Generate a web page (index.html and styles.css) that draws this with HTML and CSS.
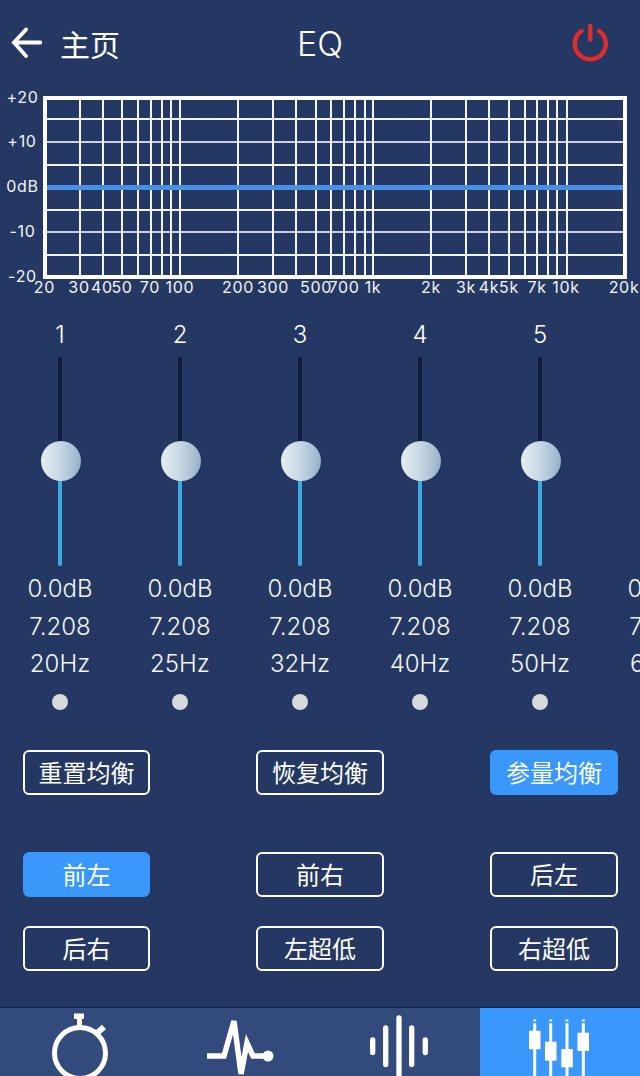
FILE: index.html
```html
<!DOCTYPE html>
<html lang="zh-CN">
<head>
  <meta charset="UTF-8">
  <meta name="viewport" content="width=device-width, initial-scale=1.0">
  <title>EQ</title>
  <link rel="stylesheet" href="styles.css">
</head>
<body>
  <div class="app">
    <header class="topbar">
      <div class="back">
        <svg class="back-icon" viewBox="0 0 32 34" width="32" height="34">
          <path d="M30.500 16.500H4M16 3.500L4 16.500L16 30" fill="none" stroke="#fff" stroke-width="3.800" stroke-linecap="round" stroke-linejoin="miter"/>
        </svg>
        <span class="back-label">主页</span>
      </div>
      <h1 class="title">EQ</h1>
      <svg class="power-icon" viewBox="0 0 38 40" width="38" height="40">
        <path d="M9.500 8A15.500 15.500 0 1 0 27.100 8" fill="none" stroke="#e12c2c" stroke-width="4.400" stroke-linecap="round"/>
        <path d="M18.300 3V16.500" fill="none" stroke="#e12c2c" stroke-width="4.400" stroke-linecap="round"/>
      </svg>
    </header>

    <!-- 频响曲线 -->
    <svg class="chart" viewBox="0 84 640 216" width="640" height="216">
      <g class="grid">
        <path d="M47 119H623M47 165H623M47 210H623M47 255H623"/>
        <path class="grid-soft" d="M47 142H623M47 232H623"/>
        <path d="M80 98V277M103 98V277M122 98V277M138 98V277M151 98V277M162 98V277M171 98V277M180 98V277"/>
        <path d="M238 98V277M273 98V277M296 98V277M316 98V277M331 98V277M344 98V277M355 98V277M365 98V277M373 98V277"/>
        <path d="M431 98V277M466 98V277M489 98V277M509 98V277M525 98V277M537 98V277M548 98V277M557 98V277M567 98V277"/>
      </g>
      <rect class="frame" x="45" y="98" width="580" height="179"/>
      <path class="zero-line" d="M47 187.500H623"/>
      <g class="y-labels">
        <text x="22.500" y="102.500">+20</text>
        <text x="22" y="147">+10</text>
        <text x="22.500" y="192">0dB</text>
        <text x="22.500" y="236.500">-10</text>
        <text x="22.500" y="281.500">-20</text>
      </g>
      <g class="x-labels">
        <text x="44.500" y="293">20</text>
        <text x="79" y="293">30</text>
        <text x="102" y="293">40</text>
        <text x="122" y="293">50</text>
        <text x="150" y="293">70</text>
        <text x="180" y="293">100</text>
        <text x="238" y="293">200</text>
        <text x="273" y="293">300</text>
        <text x="316" y="293">500</text>
        <text x="344" y="293">700</text>
        <text x="373" y="293">1k</text>
        <text x="431" y="293">2k</text>
        <text x="466" y="293">3k</text>
        <text x="489" y="293">4k</text>
        <text x="509" y="293">5k</text>
        <text x="537" y="293">7k</text>
        <text x="566" y="293">10k</text>
        <text x="624" y="293">20k</text>
      </g>
    </svg>

    <section class="bands">
      <div class="band">
        <div class="band-no">1</div>
        <div class="slider"><div class="track-top"></div><div class="knob"></div><div class="track-bottom"></div></div>
        <div class="band-val">0.0dB</div><div class="band-val">7.208</div><div class="band-val">20Hz</div>
        <div class="band-dot"></div>
      </div>
      <div class="band">
        <div class="band-no">2</div>
        <div class="slider"><div class="track-top"></div><div class="knob"></div><div class="track-bottom"></div></div>
        <div class="band-val">0.0dB</div><div class="band-val">7.208</div><div class="band-val">25Hz</div>
        <div class="band-dot"></div>
      </div>
      <div class="band">
        <div class="band-no">3</div>
        <div class="slider"><div class="track-top"></div><div class="knob"></div><div class="track-bottom"></div></div>
        <div class="band-val">0.0dB</div><div class="band-val">7.208</div><div class="band-val">32Hz</div>
        <div class="band-dot"></div>
      </div>
      <div class="band">
        <div class="band-no">4</div>
        <div class="slider"><div class="track-top"></div><div class="knob"></div><div class="track-bottom"></div></div>
        <div class="band-val">0.0dB</div><div class="band-val">7.208</div><div class="band-val">40Hz</div>
        <div class="band-dot"></div>
      </div>
      <div class="band">
        <div class="band-no">5</div>
        <div class="slider"><div class="track-top"></div><div class="knob"></div><div class="track-bottom"></div></div>
        <div class="band-val">0.0dB</div><div class="band-val">7.208</div><div class="band-val">50Hz</div>
        <div class="band-dot"></div>
      </div>
      <div class="band">
        <div class="band-no">6</div>
        <div class="slider"><div class="track-top"></div><div class="knob"></div><div class="track-bottom"></div></div>
        <div class="band-val">0.0dB</div><div class="band-val">7.208</div><div class="band-val">63Hz</div>
        <div class="band-dot"></div>
      </div>
    </section>

    <section class="actions">
      <button class="btn">重置均衡</button>
      <button class="btn">恢复均衡</button>
      <button class="btn btn-on">参量均衡</button>
    </section>

    <section class="channels">
      <button class="btn btn-on">前左</button>
      <button class="btn">前右</button>
      <button class="btn">后左</button>
      <button class="btn">后右</button>
      <button class="btn">左超低</button>
      <button class="btn">右超低</button>
    </section>

    <nav class="tabs">
      <div class="tab">
        <svg viewBox="0 0 160 68" width="160" height="68">
          <circle cx="80" cy="45" r="25.500" fill="none" stroke="#fff" stroke-width="5"/>
          <path d="M74 5.500H84V11H82V18H77V11H74Z" fill="#fff"/>
          <path d="M97 25L104 19" fill="none" stroke="#fff" stroke-width="6"/>
        </svg>
      </div>
      <div class="tab">
        <svg viewBox="0 0 160 68" width="160" height="68">
          <path d="M47 48H64L74 13L81 66L87 35L93 48H106" fill="none" stroke="#fff" stroke-width="5.500" stroke-linejoin="miter"/>
          <circle cx="108" cy="48" r="5.500" fill="#fff"/>
        </svg>
      </div>
      <div class="tab">
        <svg viewBox="0 0 160 68" width="160" height="68">
          <path d="M79 10V72M65.700 20V56.500M91.700 20V56.500M52.700 32V44.500M105.300 32V44.500" fill="none" stroke="#fff" stroke-width="5.300" stroke-linecap="round"/>
        </svg>
      </div>
      <div class="tab tab-on">
        <svg viewBox="0 0 160 68" width="160" height="68">
          <path d="M54.700 15.300V68M70.700 15.300V68M87 15.300V68M103.300 15.300V68" fill="none" stroke="#fff" stroke-width="3"/>
          <path d="M54.700 11V13.700M70.700 11V13.700M87 11V13.700M103.300 11V13.700" fill="none" stroke="#fff" stroke-width="3" opacity=".7"/>
          <rect x="49" y="22.700" width="11.500" height="18.600" fill="#fff"/>
          <rect x="65" y="33.700" width="11.500" height="19" fill="#fff"/>
          <rect x="81.300" y="41" width="11.500" height="18.300" fill="#fff"/>
          <rect x="97.500" y="24.700" width="11.500" height="18.300" fill="#fff"/>
        </svg>
      </div>
    </nav>
  </div>
</body>
</html>
```

FILE: styles.css
```css
body {
  margin: 0;
  background-color: #253864;
  font-family: "Inter", "Noto Sans CJK SC", sans-serif;
  color: #fff;
  overflow: hidden;
}

.app {
  width: 640px;
  height: 1076px;
  display: flex;
  flex-direction: column;
  overflow: hidden;
}

.topbar {
  height: 84px;
  box-sizing: border-box;
  padding: 2px 30px 0 10px;
  display: flex;
  align-items: center;
  justify-content: space-between;
  position: relative;
}

.back {
  display: flex;
  align-items: center;
  gap: 20px;
}

.back-label {
  font-size: 30px;
  font-weight: 400;
  margin-left: -2px;
}

.title {
  position: absolute;
  left: 0;
  right: 0;
  top: 23px;
  margin: 0;
  text-align: center;
  font-size: 34px;
  font-weight: 300;
}

.chart {
  display: block;
  flex-shrink: 0;
}

.grid path {
  fill: none;
  stroke: #f1f4f8;
  stroke-width: 2;
}

.grid .grid-soft {
  stroke: #c9d2e0;
}

.frame {
  fill: none;
  stroke: #fff;
  stroke-width: 4;
}

.zero-line {
  fill: none;
  stroke: #4a8fe6;
  stroke-width: 5;
}

.y-labels text,
.x-labels text {
  fill: #f2f4f8;
  font-size: 16px;
  font-weight: 400;
  letter-spacing: 0.7px;
  text-anchor: middle;
}

.bands {
  display: flex;
  height: 416px;
  flex-shrink: 0;
  padding-top: 20px;
  box-sizing: border-box;
}

.band {
  width: 120px;
  flex-shrink: 0;
  display: flex;
  flex-direction: column;
  align-items: center;
}

.band-no {
  font-size: 24px;
  line-height: 30px;
  font-weight: 300;
}

.slider {
  width: 40px;
  height: 209px;
  margin-top: 7px;
  margin-bottom: 4px;
  display: flex;
  flex-direction: column;
  align-items: center;
}

.track-top {
  width: 4px;
  height: 84px;
  background-color: #0f1c3d;
  border-radius: 2px 2px 0 0;
}

.knob {
  width: 40px;
  height: 40px;
  margin-left: 2px;
  border-radius: 50%;
  flex-shrink: 0;
  background: linear-gradient(to right, #e6edf0, #c6d6e2 50%, #93b1c8);
}

.track-bottom {
  width: 4px;
  height: 85px;
  background-color: #3ea9e3;
  border-radius: 0 0 2px 2px;
}

.band-val {
  font-size: 24px;
  line-height: 37.500px;
  font-weight: 300;
  color: #f2f5f9;
}

.band-dot {
  width: 16px;
  height: 16px;
  margin-top: 11px;
  border-radius: 50%;
  background-color: #d9d9dc;
}

.actions,
.channels {
  display: grid;
  grid-template-columns: 127px 128px 128px;
  column-gap: 106px;
  padding-left: 23px;
}

.actions {
  margin-top: 34px;
}

.channels {
  margin-top: 57px;
  row-gap: 29px;
}

.btn {
  height: 45px;
  box-sizing: border-box;
  padding: 0 0 3px;
  border: 2px solid #fff;
  border-radius: 6px;
  background: transparent;
  color: #fff;
  font-family: inherit;
  font-size: 24px;
  font-weight: 400;
}

.btn-on {
  border-color: #3a97fb;
  background-color: #3a97fb;
}

.tabs {
  margin-top: auto;
  height: 69px;
  display: flex;
  border-top: 1px solid #15224a;
  background-color: #334a7c;
  flex-shrink: 0;
  box-sizing: border-box;
}

.tab {
  width: 160px;
  overflow: hidden;
}

.tab svg {
  display: block;
}

.tab-on {
  background-color: #3a97fb;
}
```
